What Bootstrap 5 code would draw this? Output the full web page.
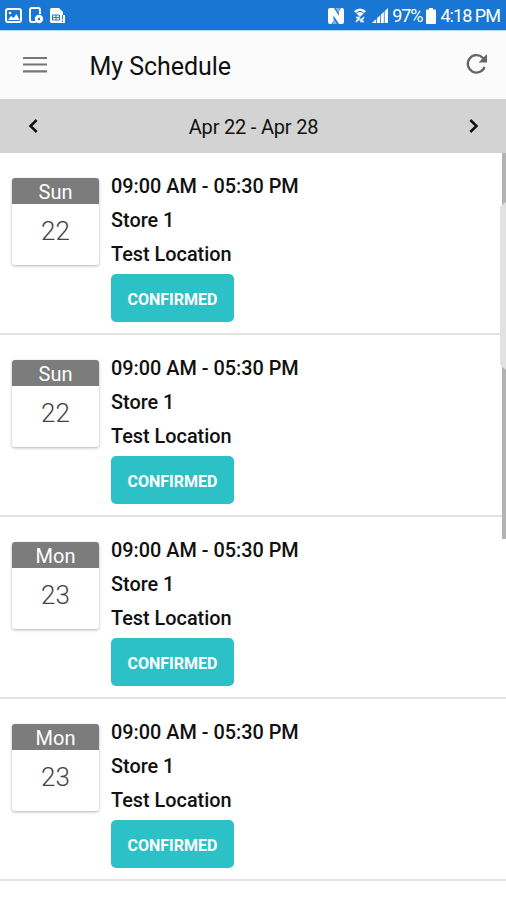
<!DOCTYPE html>
<html lang="en">
<head>
<meta charset="utf-8">
<meta name="viewport" content="width=device-width, initial-scale=1">
<title>My Schedule</title>
<link href="https://cdn.jsdelivr.net/npm/bootstrap@5.3.0/dist/css/bootstrap.min.css" rel="stylesheet">
<style>
body{font-family:Roboto,"Liberation Sans",sans-serif;background:#fff;color:#111;height:900px;overflow:hidden}
svg{display:block;flex:none}
.statusbar{height:30px;background:#1976d2;color:#fff;font-size:18px;line-height:30px;padding:1px 6px 0 5px}
.statusbar span{white-space:nowrap}
.statusbar .pct{letter-spacing:-1.1px}
.statusbar .clock{letter-spacing:-.95px}
.status-gap{gap:5px}
.appbar{height:69px;background:#fbfbfb;padding:0 18px 0 23px;border-top:1px solid #b9d3f3}
.appbar h1{font-size:25px;font-weight:400;line-height:30px;margin:3px 0 0 42.500px;letter-spacing:-.05px}
.weekbar{height:54px;background:#d3d3d3;padding:0 27px 0 28px;font-size:20px}
.week{letter-spacing:-.2px;padding-top:2px}
.shift{height:182px;padding:17px 12px 0;border-bottom:2px solid #e2e2e2}
.datebox{width:87px;height:87px;margin-top:8px;border-radius:3px;background:#fff;box-shadow:0 1px 3px rgba(0,0,0,.3)}
.dayname{height:26px;line-height:28px;background:#7c7c7c;color:#fff;font-size:20px}
.daynum{font-size:26px;line-height:54px;font-weight:300;color:#444}
.details{margin-left:12px;font-size:19.85px;font-weight:500;line-height:34px}
.btn-confirm{width:123px;height:48px;margin-top:2px;padding:3px 0 0;background:#2cc1c6;color:#fff;font-size:16px;font-weight:700;border:0;border-radius:5px}
.scrolltrack{top:153px;right:0;width:4px;height:386px;background:#b3b3b3}
.edgehandle{top:202px;right:0;width:6px;height:168px;background:#e2e2e2;clip-path:polygon(100% 0,0 5px,0 163px,100% 100%)}
</style>
<script src="https://cdn.jsdelivr.net/npm/bootstrap@5.3.0/dist/js/bootstrap.bundle.min.js"></script>
</head>
<body class="position-relative">
<div class="statusbar d-flex align-items-center justify-content-between">
  <div class="d-flex align-items-center status-gap">
    <svg width="17" height="16" viewBox="0 0 17 16"><rect x="1" y="1" width="15" height="13" rx="2" fill="none" stroke="#fff" stroke-width="2"/><path d="M3 12l3-4 2.500 2 3-4 3 6z" fill="#fff"/><circle cx="5" cy="5" r="1.300" fill="#fff"/></svg>
    <svg width="17" height="17" viewBox="0 0 17 17"><path d="M13 7V3a2 2 0 0 0-2-2H5a2 2 0 0 0-2 2v10a2 2 0 0 0 2 2h4" fill="none" stroke="#fff" stroke-width="2"/><circle cx="12" cy="12" r="2.700" fill="none" stroke="#fff" stroke-width="3"/></svg>
    <svg width="17" height="17" viewBox="0 0 17 17"><path d="M1 2.500Q1 1 2.500 1H10l4 4v3h2v8H2.500Q1 16 1 14.500z" fill="#fff"/><path d="M3.500 8h7v5h-7zM3.500 10.500h7M7 8v5M13.500 8v4.500M13.500 13.500v1.500" fill="none" stroke="#1976d2"/></svg>
  </div>
  <div class="d-flex align-items-center">
    <svg class="me-2" width="16" height="16" viewBox="0 0 16 16"><path d="M2 0h4l5 8V3l2-3h1q2 0 2 2v12q0 2-2 2h-3L5.500 7.500V13L3.500 16H2q-2 0-2-2V2q0-2 2-2z" fill="#fff"/><path d="M7.500 0H12L11 2v4zM9 16H4.500L5.500 14v-4z" fill="#fff" opacity=".45"/></svg>
    <svg class="me-1" width="16" height="17" viewBox="0 0 16 17"><path d="M2 4Q8-1 14 4L8 10z" fill="#fff"/><path d="M4.500 5.500Q8 3 11.500 5.500" fill="none" stroke="#1976d2"/><path d="M4 15l3-4M4 10.500h3v3M12 10l-3 4M12 14.500H9v-3" fill="none" stroke="#fff" stroke-width="1.400"/></svg>
    <svg class="me-1" width="16" height="16" viewBox="0 0 16 16"><path d="M0 15L16 0v15z" fill="#fff"/><path d="M4.500 9v6M8.500 5v10M12.300 2v13" stroke="#1976d2" stroke-width=".8"/></svg>
    <span class="pct">97%</span>
    <svg class="ms-1 me-1" width="10" height="16" viewBox="0 0 10 16"><path d="M3 0h4v1.500h2q1 0 1 1V15q0 1-1 1H1q-1 0-1-1V2.500q0-1 1-1h2z" fill="#fff"/></svg>
    <span class="clock">4:18 PM</span>
  </div>
</div>
<header class="appbar d-flex align-items-center">
  <svg width="24" height="18" viewBox="0 0 24 18"><path d="M0 2h24M0 8.500h24M0 15.300h24" stroke="#777" stroke-width="2.200"/></svg>
  <h1>My Schedule</h1>
  <svg class="ms-auto" width="23" height="24" viewBox="0 0.500 23 24"><path d="M19.600 14.500A8.700 8.700 0 1 1 17.700 5.200L19 6.500" fill="none" stroke="#666" stroke-width="2.300"/><path d="M22 1.500v8.500h-8.500z" fill="#666"/></svg>
</header>
<nav class="weekbar d-flex align-items-center justify-content-between">
  <svg width="10" height="14" viewBox="0 0 10 14"><path d="M8.700 1L2.500 7l6.200 6" fill="none" stroke="#111" stroke-width="2.500"/></svg>
  <span class="week">Apr 22 - Apr 28</span>
  <svg width="10" height="14" viewBox="0 0 10 14"><path d="M1.300 1l6.200 6-6.200 6" fill="none" stroke="#111" stroke-width="2.500"/></svg>
</nav>
<main>
  <div class="shift d-flex">
    <div class="datebox text-center overflow-hidden"><div class="dayname">Sun</div><div class="daynum">22</div></div>
    <div class="details"><div>09:00 AM - 05:30 PM</div><div>Store 1</div><div>Test Location</div><button class="btn btn-confirm d-block">CONFIRMED</button></div>
  </div>
  <div class="shift d-flex">
    <div class="datebox text-center overflow-hidden"><div class="dayname">Sun</div><div class="daynum">22</div></div>
    <div class="details"><div>09:00 AM - 05:30 PM</div><div>Store 1</div><div>Test Location</div><button class="btn btn-confirm d-block">CONFIRMED</button></div>
  </div>
  <div class="shift d-flex">
    <div class="datebox text-center overflow-hidden"><div class="dayname">Mon</div><div class="daynum">23</div></div>
    <div class="details"><div>09:00 AM - 05:30 PM</div><div>Store 1</div><div>Test Location</div><button class="btn btn-confirm d-block">CONFIRMED</button></div>
  </div>
  <div class="shift d-flex">
    <div class="datebox text-center overflow-hidden"><div class="dayname">Mon</div><div class="daynum">23</div></div>
    <div class="details"><div>09:00 AM - 05:30 PM</div><div>Store 1</div><div>Test Location</div><button class="btn btn-confirm d-block">CONFIRMED</button></div>
  </div>
</main>
<div class="scrolltrack position-absolute"></div>
<div class="edgehandle position-absolute"></div>
</body>
</html>
